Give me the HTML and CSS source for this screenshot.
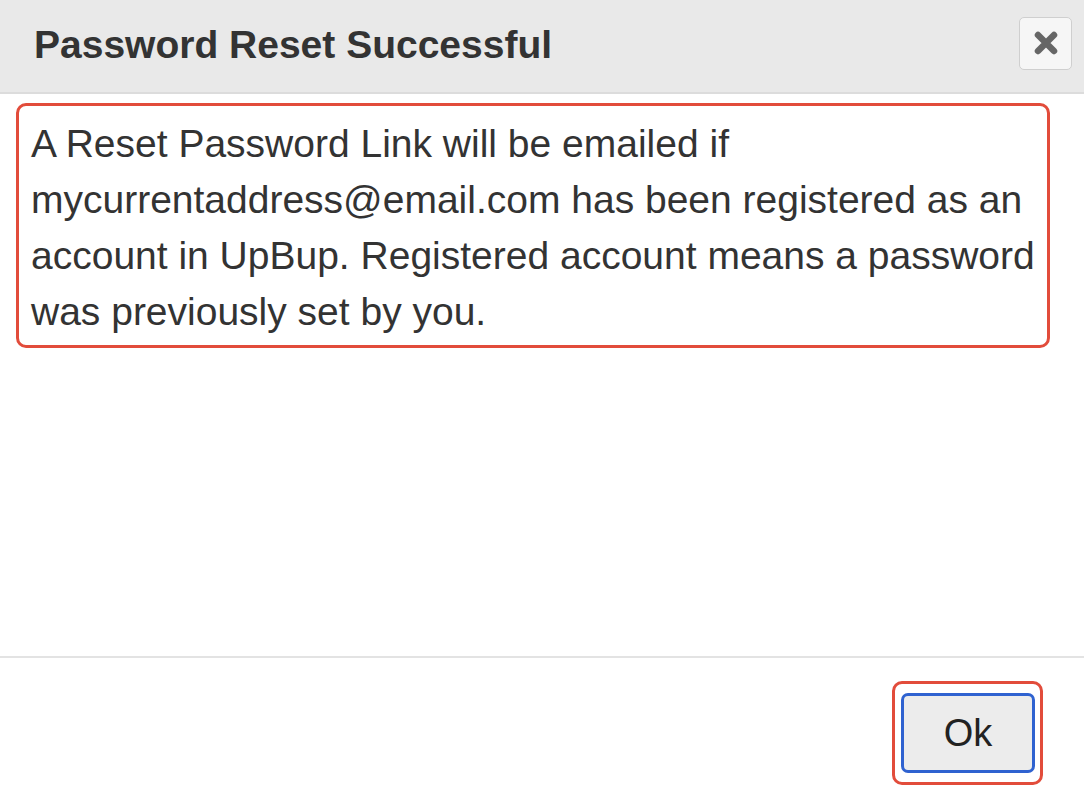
FILE: index.html
```html
<!DOCTYPE html>
<html>
<head>
<meta charset="utf-8">
<link rel="stylesheet" href="styles.css">
</head>
<body>
<div class="dialog">
  <div class="header">
    <h1 class="title">Password Reset Successful</h1>
    <button class="close" aria-label="Close">
      <svg width="26" height="24" viewBox="0 0 26 24"><path d="M5 4 L21 20 M21 4 L5 20" stroke="#666" stroke-width="6.5" stroke-linecap="round"/></svg>
    </button>
  </div>
  <div class="content">
    <p class="message">A Reset Password Link will be emailed if mycurrentaddress@email.com has been registered as an account in UpBup. Registered account means a password was previously set by you.</p>
  </div>
  <div class="footer">
    <div class="ok-highlight">
      <button class="ok">Ok</button>
    </div>
  </div>
</div>
</body>
</html>
```

FILE: styles.css
```css
* { box-sizing: border-box; }
html, body { margin: 0; padding: 0; background: #fff; }
body { font-family: "Liberation Sans", Arial, sans-serif; color: #333; width: 1084px; height: 810px; overflow: hidden; }
.dialog { display: flex; flex-direction: column; height: 810px; }
.header {
  height: 94px;
  background: #e9e9e9;
  border-bottom: 2px solid #dcdcdc;
  display: flex;
  align-items: center;
  justify-content: space-between;
  padding: 0 12px 2px 34px;
}
.title { margin: 0; font-size: 39px; font-weight: bold; color: #333; }
.close {
  width: 53px; height: 53px;
  border: 1px solid #cfcfcf;
  border-radius: 5px;
  background: #f6f6f6;
  display: flex; align-items: center; justify-content: center;
  padding: 0;
  margin-bottom: 4px;
}
.content { flex: 1; padding: 9px 34px 0 16px; }
.message {
  margin: 0;
  border: 3px solid #e24c3b;
  border-radius: 10px;
  padding: 10px 8px 5px 12px;
  font-size: 39px;
  line-height: 56px;
  color: #333;
}
.footer {
  height: 154px;
  border-top: 2px solid #e3e3e3;
  display: flex;
  justify-content: flex-end;
  padding: 23px 41px 0 0;
}
.ok-highlight {
  border: 3px solid #e24c3b;
  border-radius: 10px;
  padding: 9px 6px;
  height: 104px;
  width: 151px;
}
.ok {
  width: 134px; height: 80px;
  border: 3px solid #2f62d0;
  border-radius: 7px;
  background: #ececec;
  font-family: "Liberation Sans", Arial, sans-serif;
  font-size: 38px;
  color: #222;
  padding: 0;
}
```
